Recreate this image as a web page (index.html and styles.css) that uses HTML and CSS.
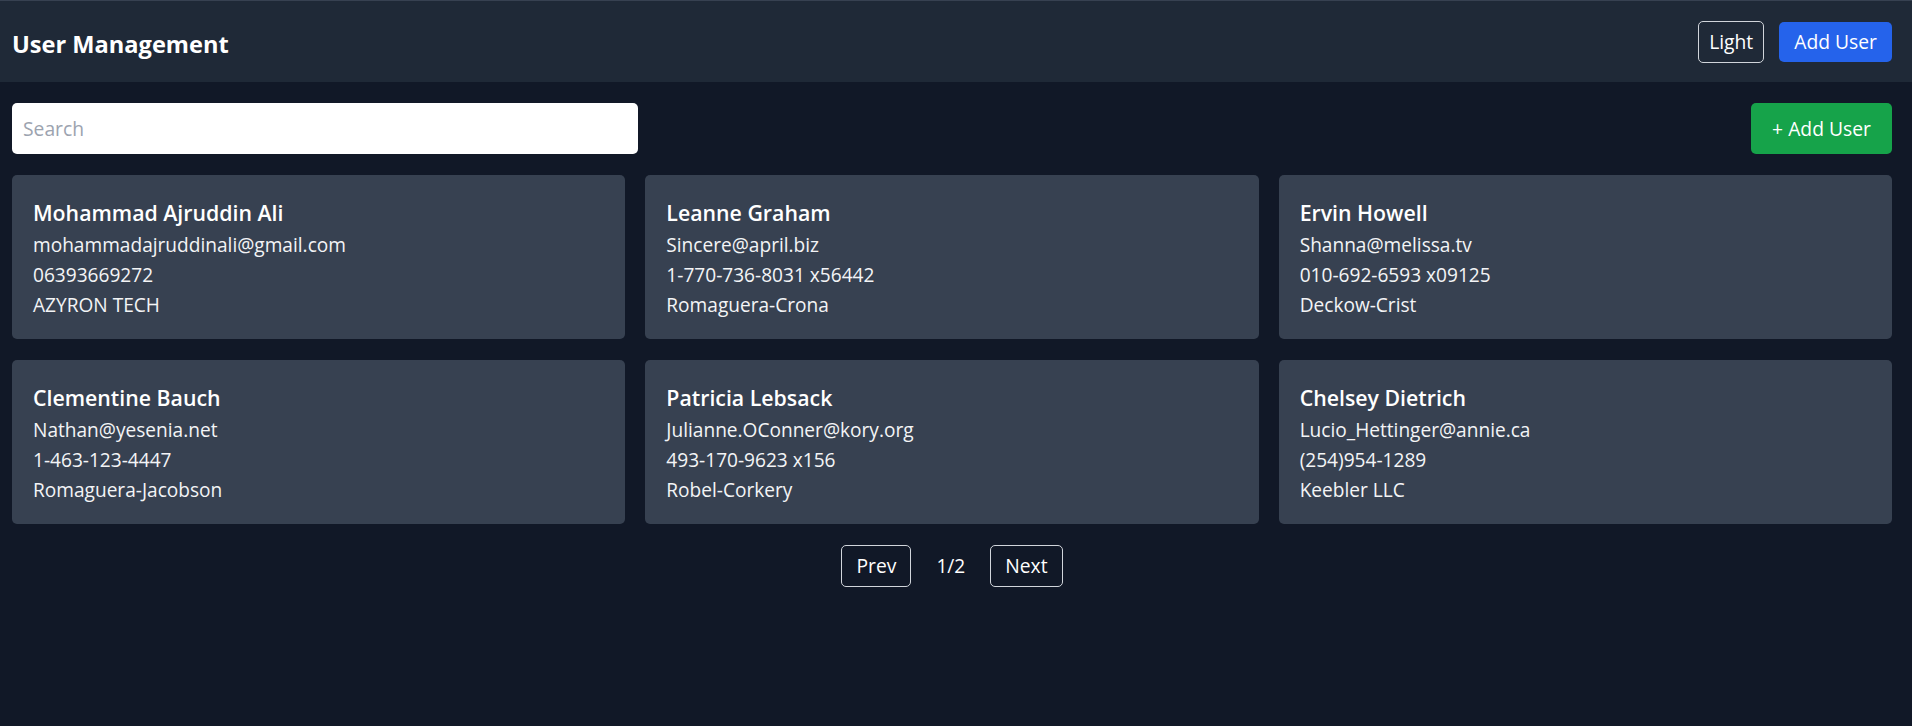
FILE: index.html
```html
<!DOCTYPE html>
<html lang="en">
<head>
<meta charset="utf-8">
<title>User Management</title>
<link rel="stylesheet" href="styles.css">
</head>
<body>
<header class="topbar">
  <h1 class="title">User Management</h1>
  <div class="topbar-actions">
    <button class="btn btn-outline">Light</button>
    <button class="btn btn-blue">Add User</button>
  </div>
</header>
<main class="main">
  <div class="toolbar">
    <input class="search" type="text" placeholder="Search">
    <button class="btn btn-green">+ Add User</button>
  </div>
  <div class="grid">
    <div class="card">
      <div class="name">Mohammad Ajruddin Ali</div>
      <div class="line">mohammadajruddinali@gmail.com</div>
      <div class="line">06393669272</div>
      <div class="line">AZYRON TECH</div>
    </div>
    <div class="card">
      <div class="name">Leanne Graham</div>
      <div class="line">Sincere@april.biz</div>
      <div class="line">1-770-736-8031 x56442</div>
      <div class="line">Romaguera-Crona</div>
    </div>
    <div class="card">
      <div class="name">Ervin Howell</div>
      <div class="line">Shanna@melissa.tv</div>
      <div class="line">010-692-6593 x09125</div>
      <div class="line">Deckow-Crist</div>
    </div>
    <div class="card">
      <div class="name">Clementine Bauch</div>
      <div class="line">Nathan@yesenia.net</div>
      <div class="line">1-463-123-4447</div>
      <div class="line">Romaguera-Jacobson</div>
    </div>
    <div class="card">
      <div class="name">Patricia Lebsack</div>
      <div class="line">Julianne.OConner@kory.org</div>
      <div class="line">493-170-9623 x156</div>
      <div class="line">Robel-Corkery</div>
    </div>
    <div class="card">
      <div class="name">Chelsey Dietrich</div>
      <div class="line">Lucio_Hettinger@annie.ca</div>
      <div class="line">(254)954-1289</div>
      <div class="line">Keebler LLC</div>
    </div>
  </div>
  <div class="pager">
    <button class="btn btn-page">Prev</button>
    <span class="page-num">1/2</span>
    <button class="btn btn-page">Next</button>
  </div>
</main>
</body>
</html>
```

FILE: styles.css
```css
* { box-sizing: border-box; }

body {
  margin: 0;
  background: #111827;
  color: #f3f4f6;
  font-family: "Open Sans", "Noto Sans", sans-serif;
  font-size: 19.1px;
}

.topbar {
  border-top: 1px solid #374151;
  background: #1f2937;
  height: 82px;
  display: flex;
  align-items: center;
  justify-content: space-between;
  padding: 0 20px 0 12px;
}

.title {
  margin: 0;
  font-size: 23.6px;
  font-weight: 700;
  color: #ffffff;
  padding-top: 4px;
}

.topbar-actions {
  display: flex;
  align-items: center;
  gap: 15px;
}

.btn {
  font-family: inherit;
  font-size: 19.3px;
  color: #ffffff;
  border-radius: 5px;
  cursor: pointer;
  line-height: 1;
}

.btn-outline {
  background: transparent;
  border: 1px solid #d1d5db;
  height: 42px;
  padding: 0 10px;
}

.btn-blue {
  background: #2563eb;
  border: none;
  height: 40px;
  padding: 0 15px;
}

.main {
  padding: 21px 20px 0 12px;
}

.toolbar {
  display: flex;
  justify-content: space-between;
  align-items: center;
  margin-bottom: 21px;
}

.search {
  width: 626px;
  height: 51px;
  border: none;
  border-radius: 5px;
  background: #ffffff;
  padding: 0 11px;
  font-family: inherit;
  font-size: 19.3px;
  color: #111827;
  outline: none;
}

.search::placeholder { color: #9ca3af; }

.btn-green {
  background: #16a34a;
  border: none;
  height: 51px;
  width: 141px;
  padding: 0;
}

.grid {
  display: grid;
  grid-template-columns: repeat(3, 1fr);
  column-gap: 20px;
  row-gap: 21px;
}

.card {
  background: #374151;
  border-radius: 5px;
  padding: 20px 20px 19px 21px;
}

.name {
  font-size: 21.3px;
  font-weight: 600;
  line-height: 35px;
  color: #ffffff;
}

.line {
  line-height: 30px;
  color: #f3f4f6;
}

.pager {
  margin-top: 21px;
  display: flex;
  justify-content: center;
  align-items: center;
  gap: 25px;
}

.btn-page {
  background: transparent;
  border: 1px solid #d1d5db;
  height: 42px;
  padding: 0 14px;
}

.page-num {
  color: #ffffff;
}
```
